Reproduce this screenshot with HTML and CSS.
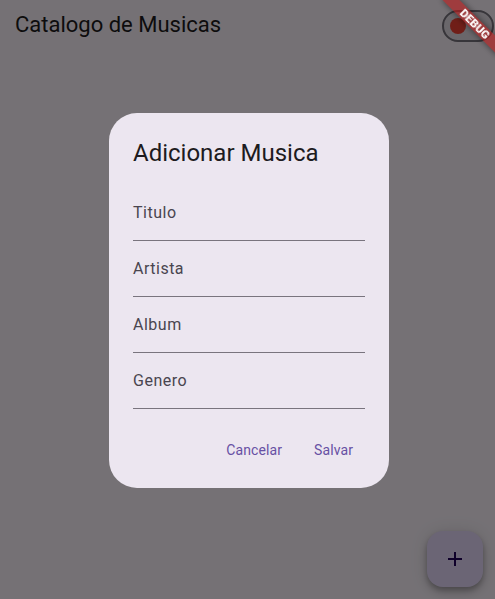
FILE: index.html
```html
<!DOCTYPE html>
<html lang="pt">
<head>
<meta charset="utf-8">
<title>Catalogo de Musicas</title>
<link rel="stylesheet" href="styles.css">
</head>
<body>
  <div class="app">
    <header class="appbar">
      <h1 class="appbar-title">Catalogo de Musicas</h1>
      <div class="switch"><span class="switch-thumb"></span></div>
    </header>
    <main class="content"></main>
    <button class="fab" type="button" aria-label="Adicionar">
      <svg width="24" height="24" viewBox="0 0 24 24"><path d="M19 13h-6v6h-2v-6H5v-2h6V5h2v6h6v2z" fill="#21005D"/></svg>
    </button>
  </div>

  <div class="scrim">
    <div class="dialog">
      <h2 class="dialog-title">Adicionar Musica</h2>
      <div class="fields">
        <div class="field"><span class="field-label">Titulo</span></div>
        <div class="field"><span class="field-label">Artista</span></div>
        <div class="field"><span class="field-label">Album</span></div>
        <div class="field"><span class="field-label">Genero</span></div>
      </div>
      <div class="actions">
        <button class="text-btn" type="button">Cancelar</button>
        <button class="text-btn" type="button">Salvar</button>
      </div>
    </div>
  </div>

  <div class="debug-banner">DEBUG</div>
</body>
</html>
```

FILE: styles.css
```css
html, body {
  margin: 0;
  padding: 0;
  width: 100%;
  height: 100%;
  overflow: hidden;
}

body {
  background: #FEF7FF;
  font-family: Roboto, "Noto Sans", "Liberation Sans", sans-serif;
  color: #1D1B20;
}

.app {
  height: 100vh;
  display: flex;
  flex-direction: column;
}

.appbar {
  height: 50px;
  display: flex;
  align-items: center;
  justify-content: space-between;
  padding-left: 15px;
  padding-right: 1px;
}

.appbar-title {
  margin: 0;
  font-size: 22px;
  font-weight: 400;
  line-height: 28px;
  color: #1D1B20;
}

.switch {
  box-sizing: content-box;
  width: 42px;
  height: 28px;
  border: 2px solid #79747E;
  border-radius: 16px;
  background: #E6E0E9;
  display: flex;
  align-items: center;
  padding-left: 6px;
  margin-top: 1px;
}

.switch-thumb {
  width: 16px;
  height: 16px;
  border-radius: 50%;
  background: #F44336;
}

.content {
  flex: 1;
}

.fab {
  position: absolute;
  right: 12px;
  bottom: 12px;
  width: 56px;
  height: 56px;
  border: none;
  border-radius: 16px;
  background: #EADDFF;
  display: flex;
  align-items: center;
  justify-content: center;
  padding: 0;
  box-shadow: 0 3px 5px rgba(0,0,0,0.2), 0 6px 10px rgba(0,0,0,0.14), 0 1px 18px rgba(0,0,0,0.12);
}

.scrim {
  position: fixed;
  inset: 0;
  background: rgba(0, 0, 0, 0.54);
  display: flex;
  align-items: flex-start;
  padding-left: 109px;
  padding-top: 113px;
}

.dialog {
  width: 280px;
  box-sizing: border-box;
  background: #ECE6F0;
  border-radius: 28px;
  padding: 24px 24px 18px 24px;
  display: flex;
  flex-direction: column;
}

.dialog-title {
  margin: 0 0 16px 0;
  font-size: 24px;
  font-weight: 400;
  line-height: 32px;
  color: #1D1B20;
}

.fields {
  display: flex;
  flex-direction: column;
}

.field {
  padding: 16px 0 15px 0;
  border-bottom: 1px solid #79747E;
}

.field-label {
  display: block;
  font-size: 16px;
  line-height: 24px;
  letter-spacing: 0.5px;
  color: #49454F;
}

.actions {
  display: flex;
  justify-content: flex-end;
  gap: 8px;
  padding-top: 21px;
}

.text-btn {
  height: 40px;
  padding: 0 12px;
  border: none;
  background: transparent;
  border-radius: 20px;
  font-family: Roboto, "Noto Sans", "Liberation Sans", sans-serif;
  font-size: 14px;
  font-weight: 400;
  line-height: 20px;
  letter-spacing: 0.1px;
  color: #6750A4;
}

.debug-banner {
  position: fixed;
  left: 435px;
  top: 18px;
  width: 80px;
  height: 12px;
  transform: rotate(45deg);
  background: rgba(183, 28, 28, 0.627);
  box-shadow: 0 0 6px rgba(0, 0, 0, 0.5);
  color: #FFFFFF;
  font-family: Roboto, "Noto Sans", "Liberation Sans", sans-serif;
  font-size: 11.5px;
  font-weight: 900;
  line-height: 12px;
  text-align: center;
}
```
